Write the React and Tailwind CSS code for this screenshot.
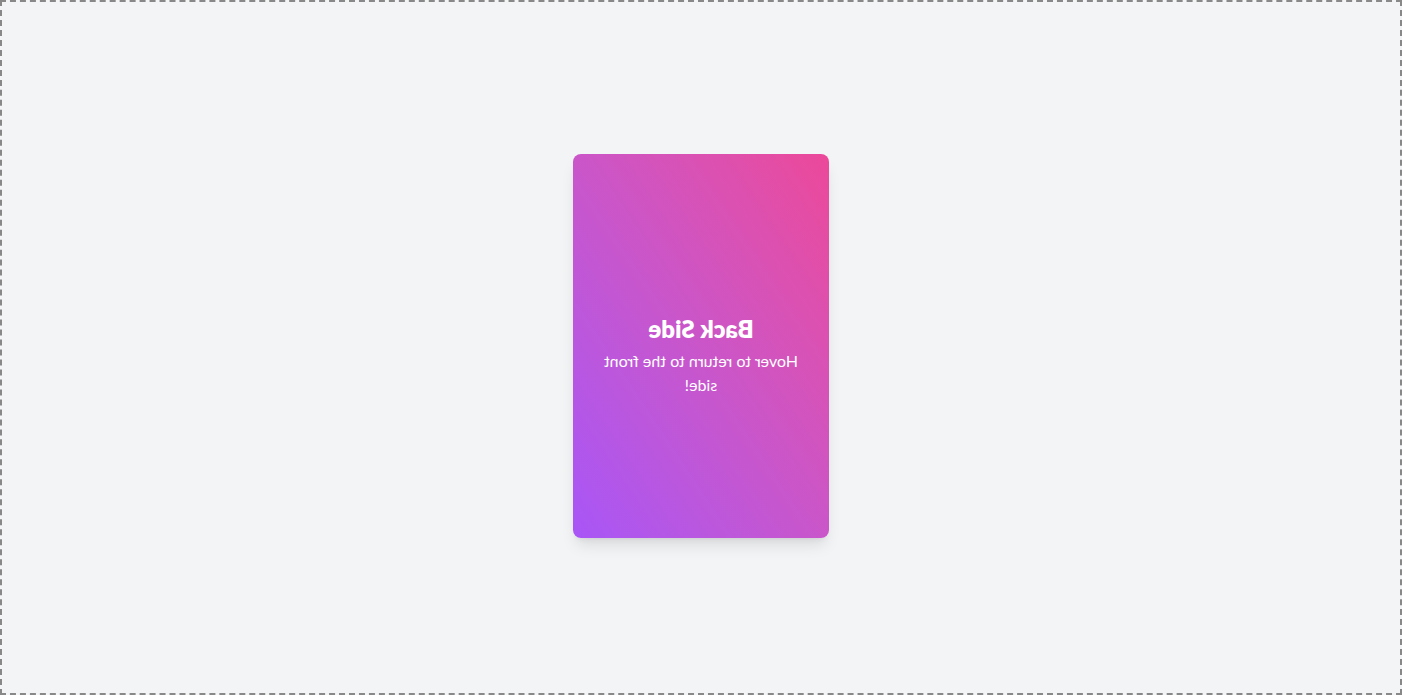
export default function App() {
  return (
    <div
      className="flex h-screen w-full items-center justify-center border-2 border-dashed border-[#888888] bg-gray-100 pb-[3px]"
      style={{ fontFamily: 'Lato, "Liberation Sans", sans-serif' }}
    >
      {/* back face of the flip card, shown mirrored */}
      <div className="flex h-96 w-64 -scale-x-100 flex-col items-center justify-center rounded-lg bg-gradient-to-br from-[#ec4899] to-[#a855f7] px-6 pt-[18px] text-center text-white shadow-lg">
        <h2 className="mb-1 text-2xl font-extrabold leading-8">Back Side</h2>
        <p className="text-base leading-6">Hover to return to the front side!</p>
      </div>
    </div>
  );
}
